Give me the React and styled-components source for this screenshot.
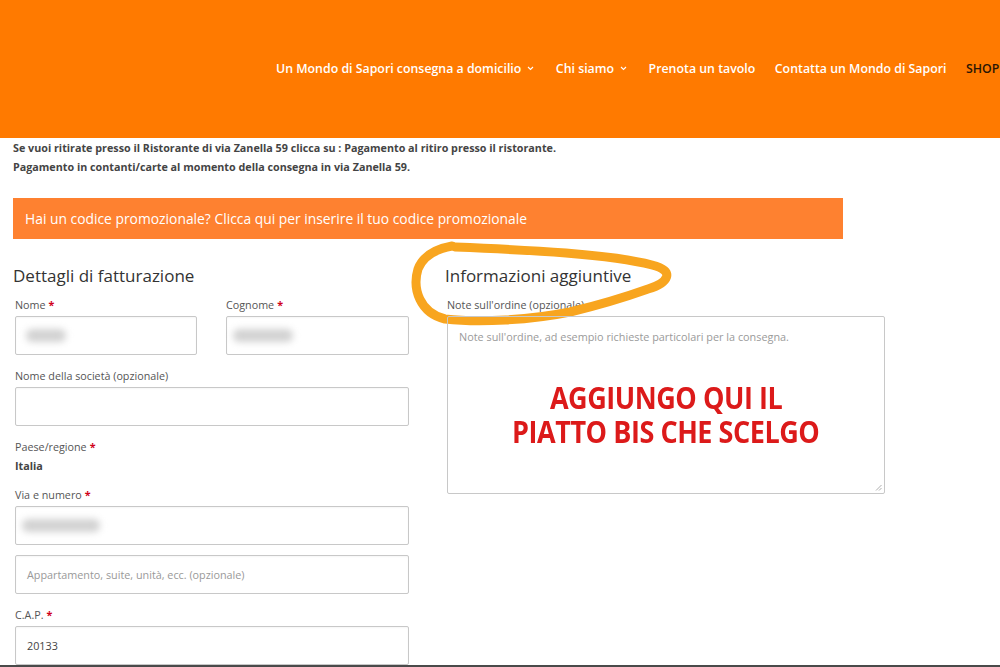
import styled, { createGlobalStyle } from 'styled-components';

const GlobalStyle = createGlobalStyle`
  html, body {
    margin: 0;
    padding: 0;
    background: #fff;
  }
  body {
    font-family: "Open Sans", "Liberation Sans", sans-serif;
    color: #555;
  }
`;

const Page = styled.div`
  position: relative;
  width: 1000px;
  height: 667px;
  overflow: hidden;
  box-sizing: border-box;
  border-bottom: 2px solid #4a4a4a;
`;

const Header = styled.header`
  height: 138px;
  background: #ff7a00;
  display: flex;
  align-items: center;
  padding: 0 0 2px 276px;
  box-sizing: border-box;
  overflow: hidden;
`;

const Nav = styled.nav`
  display: flex;
  align-items: center;
  gap: 19.5px;
  white-space: nowrap;
`;

const NavLink = styled.a`
  display: flex;
  align-items: center;
  font-size: 12.35px;
  font-weight: 600;
  color: ${({ $dark }) => ($dark ? '#2a1605' : '#fff')};
  text-decoration: none;
`;

const Chevron = styled.svg`
  margin: 0 2px 0 6px;
  width: 7px;
  height: 5px;
`;

const Content = styled.main`
  padding: 1px 13px 0;
`;

const Notice = styled.p`
  margin: 0;
  font-size: 10.75px;
  font-weight: 700;
  line-height: 19px;
  color: #444;
`;

const PromoBar = styled.div`
  margin-top: 21px;
  width: 830px;
  height: 41px;
  background: #fe8130;
  color: #fff;
  font-size: 13.85px;
  display: flex;
  align-items: center;
  padding-left: 12px;
  box-sizing: border-box;
`;

const Columns = styled.div`
  display: grid;
  grid-template-columns: 398px 442px;
  column-gap: 34px;
  margin-top: 25px;
`;

const Column = styled.section`
  position: relative;
`;

const Heading = styled.h3`
  margin: 0 0 9px;
  font-size: 17px;
  font-weight: 400;
  line-height: 24px;
  color: #333;
`;

const Fields = styled.div`
  padding: 0 2px;
`;

const Row = styled.div`
  display: grid;
  grid-template-columns: 182px 183px;
  column-gap: 29px;
`;

const Field = styled.div`
  margin-bottom: ${({ $tight }) => ($tight ? '10px' : '13px')};
`;

const Label = styled.label`
  display: block;
  font-size: 10.75px;
  line-height: 16px;
  margin-bottom: 3px;
  color: #555;
`;

const Required = styled.span`
  color: #d0021b;
  font-weight: 700;
  margin-left: 3px;
`;

const Input = styled.div`
  height: 39px;
  box-sizing: border-box;
  border: 1px solid #c8c8c8;
  border-radius: 2px;
  box-shadow: inset 0 1px 2px rgba(0, 0, 0, 0.04);
  display: flex;
  align-items: center;
  padding: 0 ${({ $pad }) => $pad || 11}px;
  font-size: 10.8px;
  color: ${({ $placeholder }) => ($placeholder ? '#999' : '#444')};
  background: #fff;
`;

const Blur = styled.span`
  display: block;
  width: ${({ $w }) => $w}px;
  height: 13px;
  background: #d2d2d2;
  border-radius: 6px;
  filter: blur(3.5px);
`;

const Value = styled.div`
  font-size: 10.8px;
  font-weight: 700;
  line-height: 16px;
  color: #444;
`;

const NotesBox = styled.div`
  position: relative;
  height: 178px;
  box-sizing: border-box;
  border: 1px solid #c8c8c8;
  border-radius: 2px;
  padding: 12px 11px 0;
`;

const Placeholder = styled.div`
  font-size: 10.85px;
  line-height: 16px;
  color: #9a9a9a;
`;

const Annotation = styled.div`
  margin-top: 36px;
  text-align: center;
  color: #dc1a1a;
  font-weight: 700;
  font-size: 30px;
  line-height: 34px;
  letter-spacing: -0.5px;
`;

const Squeeze = styled.span`
  display: inline-block;
  transform: scaleX(0.9);
`;

const Grip = styled.svg`
  position: absolute;
  right: 2px;
  bottom: 2px;
  width: 7px;
  height: 7px;
`;

const Scribble = styled.svg`
  position: absolute;
  left: -40px;
  top: -27px;
  width: 270px;
  height: 95px;
  pointer-events: none;
`;

function Down() {
  return (
    <Chevron viewBox="0 0 7 5">
      <path d="M1 1l2.5 2.5L6 1" fill="none" stroke="#fff" strokeWidth="1.1" />
    </Chevron>
  );
}

export default function App() {
  return (
    <Page>
      <GlobalStyle />
      <Header>
        <Nav>
          <NavLink>Un Mondo di Sapori consegna a domicilio<Down /></NavLink>
          <NavLink>Chi siamo<Down /></NavLink>
          <NavLink>Prenota un tavolo</NavLink>
          <NavLink>Contatta un Mondo di Sapori</NavLink>
          <NavLink $dark>SHOP</NavLink>
        </Nav>
      </Header>

      <Content>
        <Notice>Se vuoi ritirate presso il Ristorante di via Zanella 59 clicca su : Pagamento al ritiro presso il ristorante.</Notice>
        <Notice>Pagamento in contanti/carte al momento della consegna in via Zanella 59.</Notice>

        <PromoBar>Hai un codice promozionale? Clicca qui per inserire il tuo codice promozionale</PromoBar>

        <Columns>
          <Column>
            <Heading>Dettagli di fatturazione</Heading>
            <Fields>
              <Row>
                <Field>
                  <Label>Nome<Required>*</Required></Label>
                  <Input $pad={10}><Blur $w={40} /></Input>
                </Field>
                <Field>
                  <Label>Cognome<Required>*</Required></Label>
                  <Input $pad={6}><Blur $w={60} /></Input>
                </Field>
              </Row>
              <Field>
                <Label>Nome della società (opzionale)</Label>
                <Input />
              </Field>
              <Field>
                <Label>Paese/regione<Required>*</Required></Label>
                <Value>Italia</Value>
              </Field>
              <Field $tight>
                <Label>Via e numero<Required>*</Required></Label>
                <Input $pad={6}><Blur $w={78} /></Input>
              </Field>
              <Field>
                <Input $placeholder>Appartamento, suite, unità, ecc. (opzionale)</Input>
              </Field>
              <Field>
                <Label>C.A.P.<Required>*</Required></Label>
                <Input>20133</Input>
              </Field>
            </Fields>
          </Column>

          <Column>
            <Scribble viewBox="0 0 270 95">
              <path
                d="M50 10 C125 13 205 17 247 28 C271 34 263 46 243 52 C215 62 190 69 165 75 C125 83 75 86 40 82 C15 76 7 52 13 32 C18 19 31 12 47 9"
                fill="none"
                stroke="#f8a51f"
                strokeWidth="9"
                strokeLinecap="round"
                strokeLinejoin="round"
              />
            </Scribble>
            <Heading>Informazioni aggiuntive</Heading>
            <Fields>
              <Label>Note sull'ordine (opzionale)</Label>
              <NotesBox>
                <Placeholder>Note sull'ordine, ad esempio richieste particolari per la consegna.</Placeholder>
                <Annotation>
                  <Squeeze>AGGIUNGO QUI IL</Squeeze>
                  <br />
                  <Squeeze>PIATTO BIS CHE SCELGO</Squeeze>
                </Annotation>
                <Grip viewBox="0 0 7 7">
                  <path d="M6.5 1L1 6.5M6.5 4L4 6.5" stroke="#999" strokeWidth="0.8" />
                </Grip>
              </NotesBox>
            </Fields>
          </Column>
        </Columns>
      </Content>
    </Page>
  );
}
